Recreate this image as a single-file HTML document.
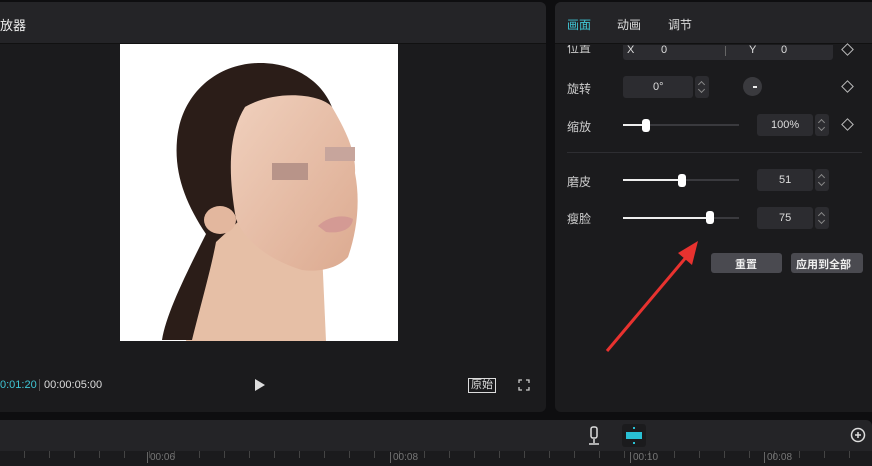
<!DOCTYPE html><html><head><meta charset="utf-8"><style>
*{margin:0;padding:0;box-sizing:border-box}
body{width:872px;height:466px;background:#0e0e10;position:relative;overflow:hidden;font-family:"Liberation Sans","Noto Sans CJK SC",sans-serif;color:#ddd;font-size:12px}
.a{position:absolute}
.box{background:#2c2c30;border-radius:3px}
.spin{background:#2c2c30;border-radius:3px;width:14px;height:22px}
.spin:before{content:"";position:absolute;left:4px;top:6px;width:4px;height:4px;border-left:1.5px solid #888;border-top:1.5px solid #888;transform:rotate(45deg)}
.spin:after{content:"";position:absolute;left:4px;top:11px;width:4px;height:4px;border-right:1.5px solid #888;border-bottom:1.5px solid #888;transform:rotate(45deg)}
.dia{width:9px;height:9px;border:1px solid #bbb;transform:rotate(45deg)}
.track{height:2px;background:#3a3a3e}
.fill{height:2px;background:#eee}
.knob{width:8px;height:13px;background:#fff;border-radius:3px}
.lbl{font-size:12px;color:#ccc}
</style></head><body>
<div class="a" style="left:0;top:2px;width:546px;height:410px;background:#1b1b1d;border-radius:0 6px 6px 0"></div>
<div class="a" style="left:0;top:2px;width:546px;height:42px;background:#242427;border-radius:0 6px 0 0;border-bottom:1px solid #111"></div>
<div class="a" style="left:0;top:15px;font-size:13px;color:#eee">放器</div>
<svg class="a" style="left:116px;top:44px" width="286" height="299" viewBox="0 0 286 299">
<defs><linearGradient id="sk" x1="0" y1="0" x2="1" y2="1"><stop offset="0" stop-color="#f0d0bd"/><stop offset="1" stop-color="#dcaa90"/></linearGradient></defs>
<rect x="4" y="0" width="278" height="297" fill="#fff"/>
<path d="M95 165 L205 185 L210 297 L70 297 Z" fill="#e6bfa6"/>
<path d="M142 19 C100 20 65 50 61 96 C58 130 70 160 90 190 C70 230 50 270 46 296 L76 296 C85 260 95 225 100 198 L125 175 L129 63 C170 50 200 55 216 63 C205 35 175 18 142 19Z" fill="#2b1d18"/>
<path d="M129 63 C160 45 205 50 216 63 C232 90 240 110 239 129 C245 160 240 190 232 213 C220 226 200 228 186 226 C150 215 128 195 120 175 C112 130 112 90 129 63Z" fill="url(#sk)"/>
<ellipse cx="104" cy="176" rx="16" ry="14" fill="#e3b79e"/>
<rect x="156" y="119" width="36" height="17" fill="#b89489"/>
<rect x="209" y="103" width="30" height="14" fill="#c7a59c"/>
<path d="M202 182 C212 172 228 170 237 175 C236 185 225 190 210 188Z" fill="#d49a94"/>
</svg>
<div class="a" style="left:0;top:379px;font-size:11px;color:#3fc5d4">0:01:20</div>
<div class="a" style="left:39px;top:379px;width:1px;height:12px;background:#555"></div>
<div class="a" style="left:44px;top:379px;font-size:11px;color:#ddd">00:00:05:00</div>
<div class="a" style="left:255px;top:379px;width:0;height:0;border-left:10px solid #ddd;border-top:6px solid transparent;border-bottom:6px solid transparent"></div>
<div class="a" style="left:468px;top:378px;border:1px solid #ddd;font-size:11px;padding:0 2px;line-height:13px">原始</div>
<svg class="a" style="left:518px;top:379px" width="12" height="12" fill="none" stroke="#ccc" stroke-width="1.3"><path d="M1 4V1H4M8 1H11V4M11 8V11H8M4 11H1V8"/></svg>
<div class="a" style="left:555px;top:2px;width:317px;height:410px;background:#1b1b1d;border-radius:6px 0 0 6px"></div>
<div class="a" style="left:555px;top:2px;width:317px;height:42px;background:#242427;border-radius:6px 0 0 0;border-bottom:1px solid #111"></div>
<div class="a" style="left:567px;top:16px;font-size:12px;color:#3fc5d4">画面</div>
<div class="a" style="left:617px;top:16px;font-size:12px;color:#ddd">动画</div>
<div class="a" style="left:668px;top:16px;font-size:12px;color:#ddd">调节</div>
<div class="a lbl" style="left:567px;top:45px;height:10px;overflow:hidden;line-height:6px">位置</div>
<div class="a box" style="left:623px;top:45px;width:210px;height:15px;border-radius:0 0 3px 3px"></div>
<div class="a" style="left:627px;top:45px;font-size:11px;line-height:10px">X</div>
<div class="a" style="left:661px;top:45px;font-size:11px;line-height:10px">0</div>
<div class="a" style="left:725px;top:46px;width:1px;height:10px;background:#666"></div>
<div class="a" style="left:749px;top:45px;font-size:11px;line-height:10px">Y</div>
<div class="a" style="left:781px;top:45px;font-size:11px;line-height:10px">0</div>
<div class="a dia" style="left:843px;top:45px"></div>
<div class="a lbl" style="left:567px;top:80px">旋转</div>
<div class="a box" style="left:623px;top:76px;width:70px;height:22px"></div>
<div class="a" style="left:653px;top:81px;font-size:11px">0°</div>
<div class="a spin" style="left:695px;top:76px"></div>
<div class="a" style="left:743px;top:77px;width:19px;height:19px;border-radius:50%;background:#3a3a3e"></div>
<div class="a" style="left:753px;top:86px;width:4px;height:2px;background:#eee"></div>
<div class="a dia" style="left:843px;top:82px"></div>
<div class="a lbl" style="left:567px;top:118px">缩放</div>
<div class="a track" style="left:623px;top:124px;width:116px"></div>
<div class="a fill" style="left:623px;top:124px;width:22px"></div>
<div class="a knob" style="left:642px;top:119px"></div>
<div class="a box" style="left:757px;top:114px;width:56px;height:22px"></div>
<div class="a" style="left:771px;top:119px;font-size:11px">100%</div>
<div class="a spin" style="left:815px;top:114px"></div>
<div class="a dia" style="left:843px;top:120px"></div>
<div class="a" style="left:567px;top:152px;width:295px;height:1px;background:#2e2e32"></div>
<div class="a lbl" style="left:567px;top:173px">磨皮</div>
<div class="a track" style="left:623px;top:179px;width:116px"></div>
<div class="a fill" style="left:623px;top:179px;width:58px"></div>
<div class="a knob" style="left:678px;top:174px"></div>
<div class="a box" style="left:757px;top:169px;width:56px;height:22px"></div>
<div class="a" style="left:779px;top:174px;font-size:11px">51</div>
<div class="a spin" style="left:815px;top:169px"></div>
<div class="a lbl" style="left:567px;top:210px">瘦脸</div>
<div class="a track" style="left:623px;top:217px;width:116px"></div>
<div class="a fill" style="left:623px;top:217px;width:86px"></div>
<div class="a knob" style="left:706px;top:211px"></div>
<div class="a box" style="left:757px;top:207px;width:56px;height:22px"></div>
<div class="a" style="left:779px;top:212px;font-size:11px">75</div>
<div class="a spin" style="left:815px;top:207px"></div>
<div class="a box" style="left:711px;top:253px;width:71px;height:20px;background:#4a4a50"></div>
<div class="a" style="left:735px;top:256px;font-size:11px;font-weight:bold;color:#eee">重置</div>
<div class="a box" style="left:791px;top:253px;width:72px;height:20px;background:#4a4a50"></div>
<div class="a" style="left:796px;top:256px;font-size:11px;font-weight:bold;color:#eee">应用到全部</div>
<svg class="a" style="left:600px;top:235px" width="110" height="120"><line x1="7" y1="116" x2="88" y2="20" stroke="#e8322f" stroke-width="3"/><polygon points="98,6 78,18 92,30" fill="#e8322f"/></svg>
<div class="a" style="left:0;top:420px;width:872px;height:31px;background:#242427;border-radius:0 6px 0 0"></div>
<svg class="a" style="left:587px;top:426px" width="14" height="20" fill="none" stroke="#ddd" stroke-width="1.5"><rect x="4" y="1" width="6" height="11" rx="2"/><path d="M7 13V17M2 18H12"/></svg>
<div class="a" style="left:622px;top:424px;width:24px;height:23px;background:#1b1b1d;border-radius:3px"></div>
<div class="a" style="left:626px;top:432px;width:16px;height:7px;background:#29c0d4"></div>
<div class="a" style="left:633px;top:427px;width:2px;height:17px;border-top:2px dotted #29c0d4;border-bottom:2px dotted #29c0d4"></div>
<svg class="a" style="left:850px;top:427px" width="16" height="16" fill="none" stroke="#ddd" stroke-width="1.5"><circle cx="8" cy="8" r="6.5"/><path d="M8 5V11M5 8H11"/></svg>
<div class="a" style="left:0;top:451px;width:872px;height:15px;background:#1b1b1d"></div>
<div class="a" style="left:0;top:451px;width:872px;height:7px;background:repeating-linear-gradient(90deg,transparent 0 24px,#444 24px 25px)"></div>
<div class="a" style="left:147px;top:452px;font-size:10px;color:#777;border-left:1px solid #666;padding-left:2px">00:06</div>
<div class="a" style="left:390px;top:452px;font-size:10px;color:#777;border-left:1px solid #666;padding-left:2px">00:08</div>
<div class="a" style="left:630px;top:452px;font-size:10px;color:#777;border-left:1px solid #666;padding-left:2px">00:10</div>
<div class="a" style="left:764px;top:452px;font-size:10px;color:#777;border-left:1px solid #666;padding-left:2px">00:08</div>
</body></html>
